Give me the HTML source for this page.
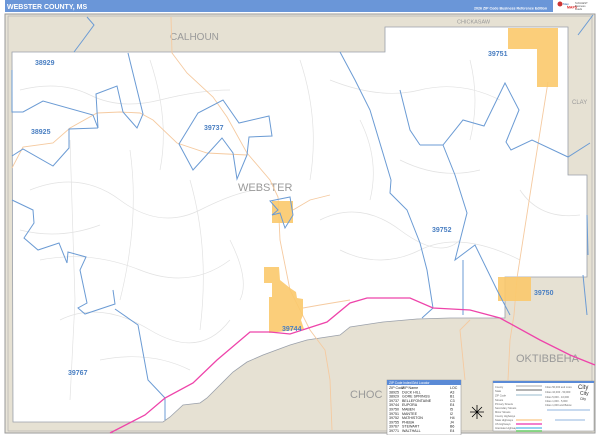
<!DOCTYPE html>
<html><head><meta charset="utf-8"><style>
html,body{margin:0;padding:0;background:#fff;width:600px;height:435px;overflow:hidden;font-family:"Liberation Sans",sans-serif}
</style></head><body>
<svg width="600" height="435" viewBox="0 0 600 435" xmlns="http://www.w3.org/2000/svg" font-family="Liberation Sans, sans-serif">
<rect x="0" y="0" width="600" height="435" fill="#fff"/>
<rect x="5" y="0" width="548" height="12" fill="#6a96d8"/>
<text x="7" y="9" font-size="7" font-weight="bold" fill="#fff">WEBSTER COUNTY, MS</text>
<text x="474" y="9.5" font-size="3.6" font-weight="bold" fill="#fff">2026 ZIP Code Business Reference Edition</text>
<circle cx="560" cy="4" r="2.5" fill="#c33"/>
<text x="563" y="5" font-size="3" fill="#36a">Map</text>
<text x="567" y="8.5" font-size="3.5" font-weight="bold" fill="#d22">MAPS</text>
<text x="575" y="4" font-size="2.6" fill="#555">SUGGEST</text>
<text x="575" y="7" font-size="2.6" fill="#555">Business</text>
<text x="575" y="10" font-size="2.6" fill="#555">Leads</text>
<rect x="5" y="14" width="590" height="419" fill="#e8e4d8" stroke="#999" stroke-width="1"/>
<rect x="8" y="16" width="584" height="415" fill="#e6e1d3" stroke="#aaa" stroke-width="0.6"/>
<path d="M12,52 L385,52 L385,27 L568,27 L568,175 L587,175 L587,277 L505,277 L505,318 L450,318 L417,319 L383,322 L350,327 L340,335 L307,340 L290,345 L263,355 L247,362 L233,372 L220,385 L207,398 L200,403 L183,405 L170,417 L163,422 L13,422 Z" fill="#fff" stroke="#9aa0aa" stroke-width="0.8"/>
<g stroke="#e2e2e2" stroke-width="0.7" fill="none">
<path d="M20,90 Q60,80 90,95 T160,100 T230,90"/><path d="M30,190 Q80,170 120,200 T200,210 T260,190"/>
<path d="M40,260 Q90,250 140,270 T230,260"/><path d="M60,320 Q100,300 150,330 T230,320"/>
<path d="M70,140 L75,300 L70,400"/><path d="M130,150 Q140,220 120,300"/><path d="M190,180 Q210,250 200,330"/>
<path d="M300,60 Q320,120 310,180"/><path d="M330,80 Q380,100 420,90 T500,100"/><path d="M320,220 Q360,200 400,230 T460,240"/>
<path d="M340,250 Q380,270 420,250 T520,260"/><path d="M470,60 Q480,100 470,140"/><path d="M360,120 Q380,160 370,200"/>
<path d="M230,240 Q250,280 240,300"/><path d="M520,190 Q540,220 580,215"/><path d="M100,360 Q150,350 190,370"/>
<path d="M20,230 Q60,240 100,225"/><path d="M150,60 Q170,120 160,170"/><path d="M400,160 Q440,180 480,170"/>
</g>
<text x="170" y="40" font-size="10" fill="#9a9a9a">CALHOUN</text>
<text x="457" y="23.5" font-size="5.5" fill="#9a9a9a">CHICKASAW</text>
<text x="572" y="104" font-size="6" fill="#9a9a9a">CLAY</text>
<text x="516" y="362" font-size="11" fill="#9a9a9a">OKTIBBEHA</text>
<text x="350" y="398" font-size="11" fill="#9a9a9a">CHOC</text>
<text x="238" y="191" font-size="11" fill="#9a9a9a">WEBSTER</text>
<g stroke="#f5caa0" stroke-width="0.9" fill="none">
<path d="M171,17 L172,53 L187,73 L213,97 L227,117 L247,153 L270,180 L278,197 L280,240 L290,290 L310,330 L325,350 L330,380 L332,430"/>
<path d="M12,168 L23,147 L53,143 L70,128 L97,113 L120,112 L140,113 L153,120 L177,143 L207,153 L247,155"/>
<path d="M293,210 L310,200 L330,195"/>
<path d="M548,82 L532,182 L517,278 L514,315 L510,340 L508,380"/>
<path d="M470,320 L460,330 L465,380"/>
<path d="M303,308 L320,305 L350,300"/>
</g>
<g fill="#fbc96c" fill-opacity="0.9">
<path d="M264,267 L279,267 L280,280 L290,288 L296,292 L297,298 L303,299 L303,315 L301,320 L304,329 L269,333 L269,297 L272,297 L272,283 L264,283 Z"/>
<rect x="272" y="201" width="21" height="22"/>
<path d="M508,28 L558,28 L558,87 L537,87 L537,49 L508,49 Z"/>
<rect x="498" y="277" width="33" height="24"/>
</g>
<g stroke="#6b9bd4" stroke-width="1" fill="none">
<path d="M74,52 L83,40 L94,25 L87,17"/>
<path d="M12,70 L12,112 L23,112 L43,101 L93,115 L98,128 L96,94 L117,86 L123,112 L137,128 L143,114 L128,53"/>
<path d="M12,156 L23,149 L53,166 L69,148 L69,129 L98,128"/>
<path d="M179,144 L198,113 L223,100 L239,123 L269,116 L272,136 L249,137 L247,155 L237,179 L233,153 L222,138 L193,170 Z"/>
<path d="M12,200 L33,210 L34,223 L24,238 L38,250 L59,243 L67,263 L68,252 L86,257 L80,270 L87,303 L78,308 L85,314 L115,304 L113,290"/>
<path d="M115,309 L138,325 L148,380 L165,398 L165,420"/>
<path d="M270,201 L290,197 L293,215 L285,228 L280,213 L272,215 L278,210 Z"/>
<path d="M340,52 L355,80 L370,110 L391,180 L390,193 L407,210 L420,243 L427,270 L433,308 L422,318"/>
<path d="M420,145 L443,145 L463,120 L484,126 L505,83 L519,110 L506,142 L511,150 L532,140 L568,157 L590,143"/>
<path d="M443,145 L455,175 L467,213 L455,260 L475,245 L498,292 L510,315"/>
<path d="M463,260 L463,315"/>
<path d="M578,35 L593,15"/><path d="M583,275 L587,315"/><path d="M587,215 L588,255"/>
<path d="M400,90 L410,130 L420,145"/>
</g>
<path d="M110,433 L145,415 L165,398 L193,383 L217,360 L250,332 L270,332 L290,334 L327,322 L350,303 L367,298 L410,298 L433,308 L470,310 L500,318 L540,340 L570,355 L595,365" stroke="#ee44aa" stroke-width="1.3" fill="none"/>
<g font-size="7" font-weight="bold" fill="#4a7fc2">
<text x="35" y="65">38929</text><text x="488" y="56">39751</text><text x="31" y="134">38925</text>
<text x="204" y="130">39737</text><text x="432" y="232">39752</text><text x="534" y="295">39750</text>
<text x="282" y="331">39744</text><text x="68" y="375">39767</text>
</g>
<g stroke="#000" stroke-width="0.8"><path d="M470,412 L484,412 M477,405 L477,419 M472,407 L482,417 M482,407 L472,417"/></g>
<rect x="387" y="380" width="74" height="55" fill="#fff" stroke="#888" stroke-width="0.5"/>
<rect x="387" y="380" width="74" height="5" fill="#5a8ad6"/>
<text x="389" y="384" font-size="3.2" fill="#fff">ZIP Code Index/Grid Locator</text>
<g font-size="3.6" fill="#222">
<text x="389" y="389">ZIP Code</text><text x="402" y="389">ZIP Name</text><text x="450" y="389">LOC</text>
<text x="389" y="393.3">38925</text><text x="402" y="393.3">DUCK HILL</text><text x="450" y="393.3">A3</text>
<text x="389" y="397.6">38929</text><text x="402" y="397.6">GORE SPRINGS</text><text x="450" y="397.6">B1</text>
<text x="389" y="401.9">39737</text><text x="402" y="401.9">BELLEFONTAINE</text><text x="450" y="401.9">C3</text>
<text x="389" y="406.2">39744</text><text x="402" y="406.2">EUPORA</text><text x="450" y="406.2">E4</text>
<text x="389" y="410.5">39750</text><text x="402" y="410.5">MABEN</text><text x="450" y="410.5">I5</text>
<text x="389" y="414.8">39751</text><text x="402" y="414.8">MANTEE</text><text x="450" y="414.8">I2</text>
<text x="389" y="419.1">39752</text><text x="402" y="419.1">MATHISTON</text><text x="450" y="419.1">H4</text>
<text x="389" y="423.4">39755</text><text x="402" y="423.4">PHEBA</text><text x="450" y="423.4">J4</text>
<text x="389" y="427.7">39767</text><text x="402" y="427.7">STEWART</text><text x="450" y="427.7">B6</text>
<text x="389" y="432">39771</text><text x="402" y="432">WALTHALL</text><text x="450" y="432">E4</text>
</g>
<rect x="493" y="381" width="101" height="50" fill="#fff" stroke="#888" stroke-width="0.5"/>
<rect x="493" y="381" width="101" height="2" fill="#5a8ad6"/>
<g font-size="2.6" fill="#666">
<text x="495" y="388">County</text><text x="495" y="392">State</text><text x="495" y="396.5">ZIP Code</text>
<text x="495" y="401">Streets</text><text x="495" y="405">Primary Streets</text><text x="495" y="409">Secondary Streets</text>
<text x="495" y="413">Minor Streets</text><text x="495" y="417">County Highways</text><text x="495" y="421">State Highways</text>
<text x="495" y="425">US Highways</text><text x="495" y="429">Interstate Highways</text>
<text x="545" y="388">Cities 50,000 and more</text><text x="545" y="393">Cities 10,000 - 50,000</text>
<text x="545" y="398">Cities 5,000 - 10,000</text><text x="545" y="402">Cities 1,000 - 5,000</text><text x="545" y="406">Cities 1,000 and Below</text>
</g>
<g fill="none" stroke-width="1">
<path d="M516,386 L542,386" stroke="#aaa"/><path d="M516,390 L542,390" stroke="#888" stroke-width="1.2"/>
<path d="M516,395 L542,395" stroke="#9bc"/><path d="M516,420 L542,420" stroke="#fbd09a" stroke-width="1.5"/>
<path d="M516,424 L542,424" stroke="#ee55bb" stroke-width="1.5"/><path d="M516,428 L542,428" stroke="#88ccee" stroke-width="1.8"/>
<path d="M516,431 L542,431" stroke="#66cc66" stroke-width="1.5"/>
<path d="M547,410 L590,410" stroke="#6b9bd4" stroke-width="0.7"/><path d="M555,420 L585,420" stroke="#6b9bd4" stroke-width="0.7"/>
</g>
<text x="578" y="389" font-size="6" fill="#333">City</text>
<text x="580" y="395" font-size="5" fill="#333">City</text>
<text x="580" y="400" font-size="3.5" fill="#333">City</text>
</svg>
</body></html>
